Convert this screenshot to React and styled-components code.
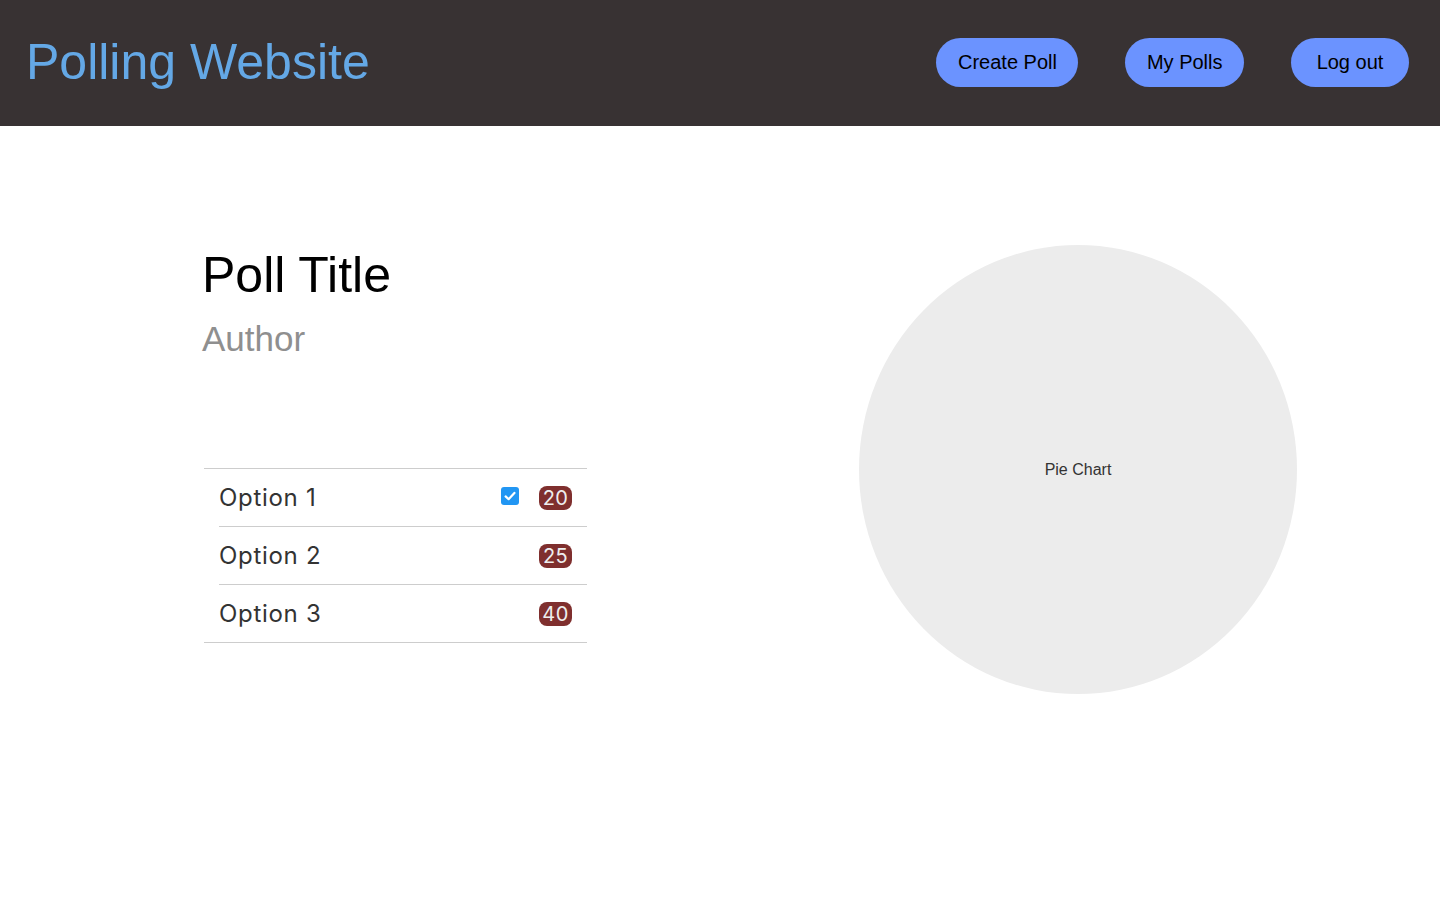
import React, { useState } from "react"
import styled, { createGlobalStyle } from "styled-components"

const GlobalStyle = createGlobalStyle`
  html, body {
    margin: 0;
    padding: 0;
    background: #ffffff;
    font-family: "Liberation Sans", Arial, sans-serif;
  }
`

const Header = styled.header`
  display: flex;
  align-items: center;
  justify-content: space-between;
  height: 126px;
  padding: 0 31px 0 26px;
  background: #383233;
  box-sizing: border-box;
`

const Brand = styled.h1`
  margin: 0 0 3px;
  font-size: 50px;
  font-weight: 400;
  color: #64a8e6;
`

const Nav = styled.nav`
  display: flex;
  gap: 47px;
  margin-bottom: 2px;
`

const NavButton = styled.button`
  min-width: 118px;
  height: 49px;
  padding: 0 21.5px;
  border: none;
  border-radius: 25px;
  background: #6b93ff;
  color: #000;
  font-family: "Liberation Sans", Arial, sans-serif;
  font-size: 20px;
  cursor: pointer;
`

const Main = styled.main`
  display: grid;
  grid-template-columns: 1fr 1fr;
  padding-top: 119px;
`

const PollInfo = styled.section`
  padding-left: 202px;
`

const Title = styled.h2`
  margin: 1px 0 0;
  font-size: 50px;
  font-weight: 400;
  color: #000;
`

const Author = styled.h3`
  margin: 15px 0 0;
  font-size: 35px;
  font-weight: 400;
  color: #8f8f8f;
`

const OptionList = styled.ul`
  list-style: none;
  margin: 109px 0 0 2px;
  padding: 0;
  width: 383px;
  border-top: 1px solid #cdcdcd;
  border-bottom: 1px solid #cdcdcd;
`

const OptionRow = styled.li`
  padding-left: 15px;

  & + & > div {
    border-top: 1px solid #cdcdcd;
  }
`

const OptionInner = styled.div`
  display: flex;
  align-items: center;
  height: 57px;
  padding-right: 15px;
`

const OptionLabel = styled.span`
  flex: 1;
  font-family: Inter, "Noto Sans", sans-serif;
  font-size: 24px;
  letter-spacing: 0.7px;
  color: #333;
`

const Check = styled.span`
  display: flex;
  align-items: center;
  justify-content: center;
  width: 18px;
  height: 18px;
  margin: 0 20px 3px 0;
  border-radius: 3px;
  background: #2196f3;
`

const Badge = styled.span`
  min-width: 33px;
  height: 24px;
  padding: 0 3px;
  box-sizing: border-box;
  border-radius: 8px;
  background: #7f2f2e;
  color: #eee;
  font-family: Inter, "Noto Sans", sans-serif;
  font-size: 20px;
  letter-spacing: 0.4px;
  line-height: 24px;
  text-align: center;
`

const ChartArea = styled.section`
  display: flex;
  justify-content: center;
  padding-right: 4px;
`

const PieChart = styled.div`
  display: flex;
  align-items: center;
  justify-content: center;
  width: 438px;
  height: 449px;
  border-radius: 50%;
  background: #ececec;
  color: #333;
  font-family: "Liberation Sans", Arial, sans-serif;
  font-size: 16px;
`

const options = [
  { label: "Option 1", votes: 20 },
  { label: "Option 2", votes: 25 },
  { label: "Option 3", votes: 40 },
]

const App = () => {
  const [selected, setSelected] = useState(0)

  return (
    <>
      <GlobalStyle />
      <Header>
        <Brand>Polling Website</Brand>
        <Nav>
          <NavButton>Create Poll</NavButton>
          <NavButton>My Polls</NavButton>
          <NavButton>Log out</NavButton>
        </Nav>
      </Header>
      <Main>
        <PollInfo>
          <Title>Poll Title</Title>
          <Author>Author</Author>
          <OptionList>
            {options.map((opt, i) => (
              <OptionRow key={opt.label} onClick={() => setSelected(i)}>
                <OptionInner>
                  <OptionLabel>{opt.label}</OptionLabel>
                  {selected === i && (
                    <Check>
                      <svg width="14" height="14" viewBox="0 0 14 14">
                        <path
                          d="M2.6 7.4 L5.6 10.2 L11.4 3.9"
                          fill="none"
                          stroke="#fff"
                          strokeWidth="2.2"
                          strokeLinecap="round"
                          strokeLinejoin="round"
                        />
                      </svg>
                    </Check>
                  )}
                  <Badge>{opt.votes}</Badge>
                </OptionInner>
              </OptionRow>
            ))}
          </OptionList>
        </PollInfo>
        <ChartArea>
          <PieChart>Pie Chart</PieChart>
        </ChartArea>
      </Main>
    </>
  )
}

export default App
